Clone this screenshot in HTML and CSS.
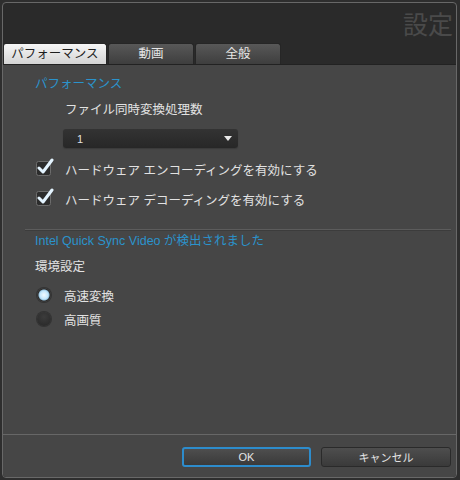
FILE: index.html
```html
<!DOCTYPE html>
<html lang="ja">
<head>
    <meta charset="UTF-8">
    <title>設定</title>
    <link rel="stylesheet" href="styles.css">
</head>
<body>
    <div class="window">
        <div class="titlebar">設定</div>

        <div class="tabs">
            <div class="tab active">パフォーマンス</div>
            <div class="tab">動画</div>
            <div class="tab">全般</div>
        </div>

        <div class="panel">
            <div class="section">
                <div class="heading">パフォーマンス</div>
                <div class="label indent">ファイル同時変換処理数</div>
                <div class="select">
                    <span>1</span>
                    <svg class="arrow" width="8" height="5" viewBox="0 0 8 5"><path d="M0 0 H8 L4 5 Z" fill="#e8e8e8"/></svg>
                </div>
                <div class="check-row first">
                    <svg class="checkbox" width="20" height="18" viewBox="0 0 20 18">
                        <rect x="1.5" y="3.5" width="14" height="14" rx="2" fill="#2c2c2c" stroke="#6c6c6c"/>
                        <path d="M4 10 L8 14 L17 2" fill="none" stroke="#e4f4ff" stroke-width="3" stroke-linecap="round" stroke-linejoin="round"/>
                    </svg>
                    <span>ハードウェア エンコーディングを有効にする</span>
                </div>
                <div class="check-row">
                    <svg class="checkbox" width="20" height="18" viewBox="0 0 20 18">
                        <rect x="1.5" y="3.5" width="14" height="14" rx="2" fill="#2c2c2c" stroke="#6c6c6c"/>
                        <path d="M4 10 L8 14 L17 2" fill="none" stroke="#e4f4ff" stroke-width="3" stroke-linecap="round" stroke-linejoin="round"/>
                    </svg>
                    <span>ハードウェア デコーディングを有効にする</span>
                </div>
            </div>

            <div class="divider"></div>

            <div class="section">
                <div class="heading notice">Intel Quick Sync Video が検出されました</div>
                <div class="label env">環境設定</div>
                <div class="radio-row first">
                    <span class="radio on"></span>
                    <span>高速変換</span>
                </div>
                <div class="radio-row">
                    <span class="radio"></span>
                    <span>高画質</span>
                </div>
            </div>
        </div>

        <div class="footer">
            <button class="btn default">OK</button>
            <button class="btn">キャンセル</button>
        </div>
    </div>
</body>
</html>
```

FILE: styles.css
```css
body {
    margin: 0;
    background-color: #2e2e2e;
    font-family: "Liberation Sans", "Noto Sans CJK JP", sans-serif;
    font-size: 12.5px;
    color: #e2e2e2;
}

.window {
    margin: 2px 3px 2px 2px;
    height: 474px;
    border: 1px solid #686868;
    border-radius: 4px;
    background-color: #2a2a2a;
    display: flex;
    flex-direction: column;
    overflow: hidden;
}

.titlebar {
    height: 40px;
    box-sizing: border-box;
    padding: 5px 3px 0 0;
    text-align: right;
    font-family: "Noto Sans CJK JP", sans-serif;
    font-size: 25px;
    line-height: 30px;
    color: #4a4a4a;
}

/* tab strip */
.tabs {
    display: flex;
    gap: 1px;
    height: 21px;
    border-bottom: 1px solid #222;
}

.tab {
    width: 86px;
    box-sizing: border-box;
    text-align: center;
    line-height: 20px;
    border: 1px solid #262626;
    border-bottom: none;
    border-radius: 3px 3px 0 0;
    background: linear-gradient(#585858, #3e3e3e);
    color: #e6e6e6;
}

.tab.active {
    width: 104px;
    background: linear-gradient(#f6f6f6, #d4d4d4);
    color: #1e1e1e;
}

.panel {
    flex: 1;
    background-color: #464646;
    padding: 11px 5px 0 22px;
}

.section {
    padding-left: 10px;
}

.heading {
    line-height: 16px;
    color: #2b93cc;
}

.label {
    line-height: 16px;
    margin-top: 10px;
}

.label.indent {
    padding-left: 30px;
}

.select {
    margin: 11px 0 0 28px;
    width: 175px;
    height: 19px;
    box-sizing: border-box;
    padding: 0 6px 0 14px;
    border-radius: 3px;
    background: linear-gradient(#333, #272727);
    box-shadow: 0 1px 1px #3a3a3a;
    display: flex;
    align-items: center;
    justify-content: space-between;
    font-size: 11px;
}

.check-row,
.radio-row {
    display: flex;
    align-items: center;
    height: 20px;
    margin-top: 10px;
}

.check-row.first {
    margin-top: 11px;
}

.checkbox {
    margin: -4px 10px 0 0;
}

.divider {
    height: 1px;
    margin: 20px 0 0 0;
    background-color: #5c5c5c;
    border-bottom: 1px solid #3c3c3c;
}

.notice {
    margin-top: 2px;
}

.env {
    margin-top: 10px;
}

.radio-row {
    margin-top: 4px;
}

.radio-row.first {
    margin-top: 10px;
}

.radio {
    width: 14px;
    height: 14px;
    margin: 0 13px 0 2px;
    border-radius: 50%;
    background: radial-gradient(circle at 50% 35%, #3c3c3c, #262626);
    box-shadow: 0 0 0 1px #333;
}

.radio.on {
    background: radial-gradient(circle, #f2faff 0, #c4e6fb 4px, #9cc8e4 5px, #2c2c2c 6px, #3a3a3a 7px);
}

.footer {
    height: 43px;
    box-sizing: border-box;
    border-top: 1px solid #676767;
    background-color: #464646;
    display: flex;
    justify-content: flex-end;
    gap: 10px;
    padding: 12px 5px 0 0;
}

.btn {
    width: 130px;
    height: 20px;
    border: 1px solid #2a2a2a;
    border-radius: 3px;
    background: linear-gradient(#4e4e4e, #3a3a3a);
    color: #e4e4e4;
    font-family: "Liberation Sans", "Noto Sans CJK JP", sans-serif;
    font-size: 11px;
    padding: 0;
}

.btn.default {
    width: 129px;
    border: 2px solid #2d8ccc;
}
```
